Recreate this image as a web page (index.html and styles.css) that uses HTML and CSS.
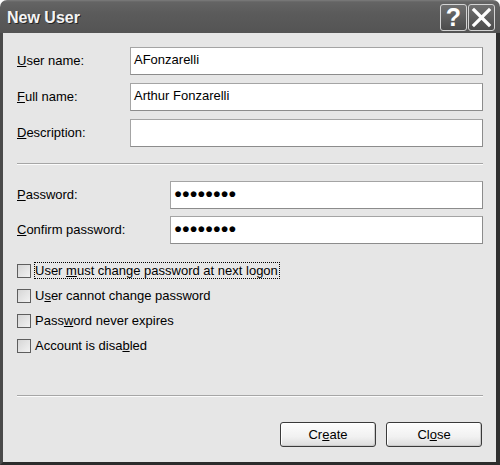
FILE: index.html
```html
<!DOCTYPE html>
<html>
<head>
<meta charset="utf-8">
<title>New User</title>
<link rel="stylesheet" href="styles.css">
</head>
<body>
<div class="window">
  <div class="titlebar">
    <span class="title">New User</span>
    <div class="tbtns">
      <span class="tbtn help">?</span>
      <span class="tbtn close">
        <svg width="25" height="25" viewBox="0 0 25 25"><path d="M5 5 L20 20 M20 5 L5 20" stroke="#fff" stroke-width="3.2" stroke-linecap="square" fill="none"/></svg>
      </span>
    </div>
  </div>
  <div class="main">
    <div class="form names">
      <span class="lbl"><u>U</u>ser name:</span>
      <div class="field">AFonzarelli</div>
      <span class="lbl"><u>F</u>ull name:</span>
      <div class="field">Arthur Fonzarelli</div>
      <span class="lbl"><u>D</u>escription:</span>
      <div class="field"></div>
    </div>
    <div class="sep"></div>
    <div class="form pw">
      <span class="lbl"><u>P</u>assword:</span>
      <div class="field dots">●●●●●●●●</div>
      <span class="lbl"><u>C</u>onfirm password:</span>
      <div class="field dots">●●●●●●●●</div>
    </div>
    <div class="checks">
      <div class="check"><span class="box"></span><span class="clbl focus">User <u>m</u>ust change password at next logon</span></div>
      <div class="check"><span class="box"></span><span class="clbl">U<u>s</u>er cannot change password</span></div>
      <div class="check"><span class="box"></span><span class="clbl">Pass<u>w</u>ord never expires</span></div>
      <div class="check"><span class="box"></span><span class="clbl">Account is disa<u>b</u>led</span></div>
    </div>
    <div class="sep sep2"></div>
    <div class="buttons">
      <span class="btn">Cr<u>e</u>ate</span>
      <span class="btn">Cl<u>o</u>se</span>
    </div>
  </div>
</div>
</body>
</html>
```

FILE: styles.css
```css
* { box-sizing: border-box; }
html, body { margin: 0; padding: 0; }
body {
  background: #fff;
  font-family: "Liberation Sans", Arial, sans-serif;
  font-size: 13px;
  color: #000;
  width: 500px;
  height: 465px;
  overflow: hidden;
}
.window {
  width: 500px;
  height: 465px;
  display: flex;
  flex-direction: column;
}
.titlebar {
  height: 33px;
  flex: none;
  display: flex;
  align-items: flex-start;
  justify-content: space-between;
  padding: 0 5px 0 7px;
  background: linear-gradient(#7c7c7c 0, #646464 2px, #5b5b5b 40%, #545454 100%);
  border-radius: 7px 7px 0 0;
}
.title {
  margin-top: 8px;
  font-weight: bold;
  font-size: 16px;
  line-height: 19px;
  color: #f4f4f4;
  text-shadow: 1px 1px 0 #262626;
}
.tbtns {
  display: flex;
  gap: 1px;
  margin-top: 4px;
}
.tbtn {
  width: 27px;
  height: 27px;
  border: 1px solid #d4d4d4;
  border-radius: 3px;
  background: linear-gradient(#707070, #4c4c4c);
  display: flex;
  align-items: center;
  justify-content: center;
  color: #fff;
}
.help {
  font-weight: bold;
  font-size: 25px;
  line-height: 25px;
}
.main {
  flex: 1;
  background: #e6e6e6;
  border-left: 3px solid #4a4a4a;
  border-right: 4px solid #2f2f2f;
  border-bottom: 3px solid #2c2c2c;
  padding: 14px 13px 0 14px;
  display: flex;
  flex-direction: column;
}
.form {
  display: grid;
  grid-template-columns: 113px 1fr;
  row-gap: 8px;
}
.form.pw {
  grid-template-columns: 153px 1fr;
  row-gap: 7px;
  margin-top: 16px;
}
.lbl {
  align-self: center;
  line-height: 16px;
  white-space: nowrap;
}
.field {
  height: 28px;
  background: #fff;
  border: 1px solid;
  border-color: #a4a4a4 #8c8c8c #8c8c8c #a4a4a4;
  padding: 4px 3px 0;
  line-height: 16px;
  white-space: nowrap;
}
.field.dots {
  font-size: 13.5px;
  letter-spacing: -0.4px;
  padding-top: 4px;
  line-height: 16px;
}
.sep {
  height: 2px;
  border-top: 1px solid #a6a6a6;
  border-bottom: 1px solid #fbfbfb;
  margin-top: 16px;
}
.checks {
  margin-top: 14px;
  display: flex;
  flex-direction: column;
}
.check {
  height: 25px;
  display: flex;
  align-items: center;
  gap: 3px;
}
.box {
  width: 14px;
  height: 14px;
  flex: none;
  border: 1px solid #5e5e5e;
  background: linear-gradient(135deg, #d6d6d6, #f2f2f2);
}
.clbl {
  line-height: 15px;
  border: 1px solid transparent;
  padding: 0 1px 0 0;
  white-space: nowrap;
}
.clbl.focus {
  border: 1px dotted #000;
}
.sep2 {
  margin-top: 37px;
}
.buttons {
  margin-top: 25px;
  margin-right: 1px;
  display: flex;
  justify-content: flex-end;
  gap: 10px;
}
.btn {
  width: 96px;
  height: 25px;
  border: 1px solid #3a3a3a;
  border-radius: 3px;
  background: linear-gradient(#fdfdfd, #f1f1f1 60%, #dcdcdc);
  box-shadow: inset -1px -1px 0 #cacaca, inset 1px 1px 0 #fff;
  display: flex;
  align-items: center;
  justify-content: center;
  line-height: 16px;
}
```
